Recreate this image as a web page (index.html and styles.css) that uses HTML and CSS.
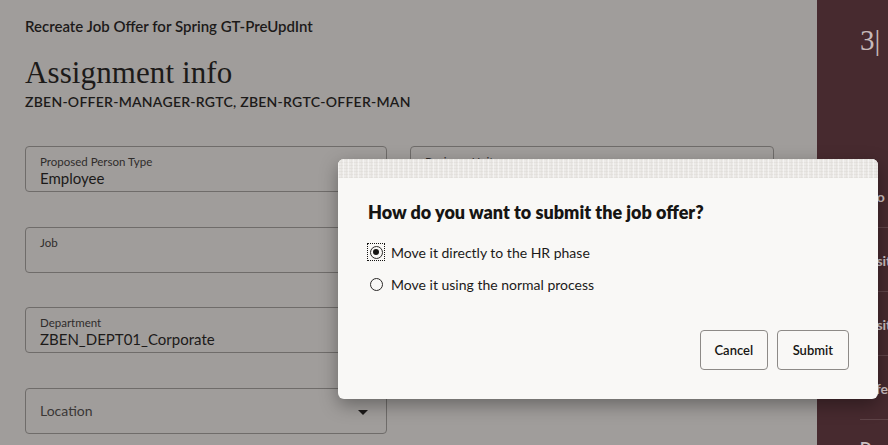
FILE: index.html
```html
<!DOCTYPE html>
<html lang="en">
<head>
<meta charset="utf-8">
<title>Assignment info</title>
<link rel="stylesheet" href="styles.css">
</head>
<body>
<div class="app">
  <main class="main">
    <div class="crumb">Recreate Job Offer for Spring GT-PreUpdInt</div>
    <h1 class="heading">Assignment info</h1>
    <div class="subhead">ZBEN-OFFER-MANAGER-RGTC, ZBEN-RGTC-OFFER-MAN</div>
    <div class="form-grid">
      <div class="field">
        <div class="field-label">Proposed Person Type</div>
        <div class="field-value">Employee</div>
      </div>
      <div class="field">
        <div class="field-label">Business Unit</div>
        <div class="field-value"></div>
      </div>
      <div class="field">
        <div class="field-label">Job</div>
        <div class="field-value"></div>
      </div>
      <div class="field" aria-label="Position"></div>
      <div class="field">
        <div class="field-label">Department</div>
        <div class="field-value">ZBEN_DEPT01_Corporate</div>
      </div>
      <div class="field" aria-label="Grade"></div>
      <div class="field field-select">
        <div class="placeholder">Location</div>
        <span class="caret"></span>
      </div>
    </div>
  </main>
  <aside class="side">
    <div class="step">3|</div>
    <ul class="side-list">
      <li>Info</li>
      <li>Position</li>
      <li>Position info</li>
      <li>Offer</li>
      <li class="section">Dar</li>
    </ul>
  </aside>
</div>

<div class="dialog" role="dialog" aria-labelledby="dlg-title">
  <div class="dialog-band"></div>
  <div class="dialog-body">
    <h2 class="dialog-title" id="dlg-title">How do you want to submit the job offer?</h2>
    <label class="radio-row">
      <span class="radio-focus"><span class="radio checked"></span></span>
      <span>Move it directly to the HR phase</span>
    </label>
    <label class="radio-row">
      <span class="radio-focus plain"><span class="radio"></span></span>
      <span>Move it using the normal process</span>
    </label>
  </div>
  <div class="dialog-footer">
    <button class="btn">Cancel</button>
    <button class="btn btn-wide">Submit</button>
  </div>
</div>
</body>
</html>
```

FILE: styles.css
```css
* { box-sizing: border-box; }

html, body {
  margin: 0;
  padding: 0;
  width: 888px;
  height: 445px;
  overflow: hidden;
}

body {
  font-family: Lato, "Noto Sans", sans-serif;
  color: #161413;
  background: #a09d9b;
}

.app {
  display: flex;
  height: 445px;
  overflow: hidden;
}

.main {
  flex: 0 0 817px;
  padding: 16px 0 0 25px;
  background: #a09d9b;
}

.crumb {
  font-size: 15px;
  font-weight: 600;
  line-height: 20px;
  color: #1c1a19;
}

.heading {
  margin: 20px 0 0;
  font-family: "Liberation Serif", serif;
  font-weight: 400;
  font-size: 31px;
  line-height: 34px;
  letter-spacing: 0.1px;
  color: #1c1a19;
}

.subhead {
  margin-top: 3px;
  font-size: 14px;
  font-weight: 600;
  line-height: 18px;
  letter-spacing: 0.25px;
  color: #1c1a19;
}

.form-grid {
  margin-top: 35px;
  display: grid;
  grid-template-columns: 362px 364px;
  column-gap: 23px;
  row-gap: 34.5px;
  grid-auto-rows: 46px;
}

.field {
  position: relative;
  border: 1px solid #6f6c6a;
  border-radius: 4px;
  padding: 8px 14px 0;
}

.field-label {
  font-size: 11.5px;
  line-height: 14px;
  color: #2f2c2b;
}

.field-value {
  font-size: 15px;
  line-height: 18px;
  color: #1c1a19;
}

.field-select {
  display: flex;
  align-items: center;
  padding-top: 0;
}

.placeholder {
  font-size: 14px;
  color: #3a3736;
}

.caret {
  position: absolute;
  right: 18px;
  top: 21px;
  width: 0;
  height: 0;
  border-left: 5px solid transparent;
  border-right: 5px solid transparent;
  border-top: 5px solid #1c1a19;
}

.side {
  flex: 1;
  background: #472a2f;
  color: #cbbfc0;
  padding-left: 43px;
  overflow: hidden;
}

.step {
  margin-top: 24px;
  font-family: "Liberation Serif", serif;
  font-size: 29px;
  line-height: 32px;
  color: #c6b9b9;
}

.side-list {
  list-style: none;
  margin: 108px 0 0;
  padding: 0;
}

.side-list li {
  height: 64px;
  padding-top: 23px;
  font-size: 14px;
  font-weight: 700;
  line-height: 20px;
  white-space: nowrap;
  border-bottom: 1px solid #5f4448;
}

.side-list li.section {
  padding-top: 17px;
  border-bottom: none;
  font-size: 15px;
}

/* dialog */
.dialog {
  position: absolute;
  left: 338px;
  top: 159px;
  width: 540px;
  height: 240px;
  background: #f9f8f6;
  border-radius: 6px;
  box-shadow: 0 6px 18px rgba(0, 0, 0, 0.35);
  overflow: hidden;
  display: flex;
  flex-direction: column;
}

.dialog-band {
  height: 19px;
  background-color: #eceae7;
  background-image:
    repeating-linear-gradient(90deg, rgba(255,255,255,0.45) 0 1px, transparent 1px 3px, rgba(220,216,212,0.35) 3px 4px, transparent 4px 5px),
    repeating-linear-gradient(0deg, rgba(214,210,206,0.35) 0 1px, transparent 1px 3px);
}

.dialog-body {
  padding: 22px 30px 0;
  flex: 1;
}

.dialog-title {
  margin: 0 0 18px;
  font-size: 18px;
  font-weight: 800;
  line-height: 24px;
  color: #161513;
}

.radio-row {
  display: flex;
  align-items: center;
  gap: 7px;
  height: 20px;
  margin-bottom: 12px;
  font-size: 14px;
  color: #1c1a19;
}

.radio-focus {
  display: flex;
  align-items: center;
  justify-content: center;
  width: 16px;
  height: 16px;
  outline: 1px dotted #161513;
}

.radio-focus.plain { outline: none; }

.radio {
  width: 13px;
  height: 13px;
  border: 1.5px solid #2a2827;
  border-radius: 50%;
  position: relative;
}

.radio.checked::after {
  content: "";
  position: absolute;
  left: 2px;
  top: 2px;
  width: 6px;
  height: 6px;
  border-radius: 50%;
  background: #161513;
}

.dialog-footer {
  display: flex;
  justify-content: flex-end;
  gap: 9px;
  padding: 0 29px 29px;
}

.btn {
  height: 40px;
  padding: 0 13.5px;
  font-family: Lato, "Noto Sans", sans-serif;
  font-size: 13px;
  font-weight: 600;
  color: #161513;
  background: #f9f8f6;
  border: 1px solid #8d8a87;
  border-radius: 4px;
}

.btn-wide { padding: 0 15px; }
```
